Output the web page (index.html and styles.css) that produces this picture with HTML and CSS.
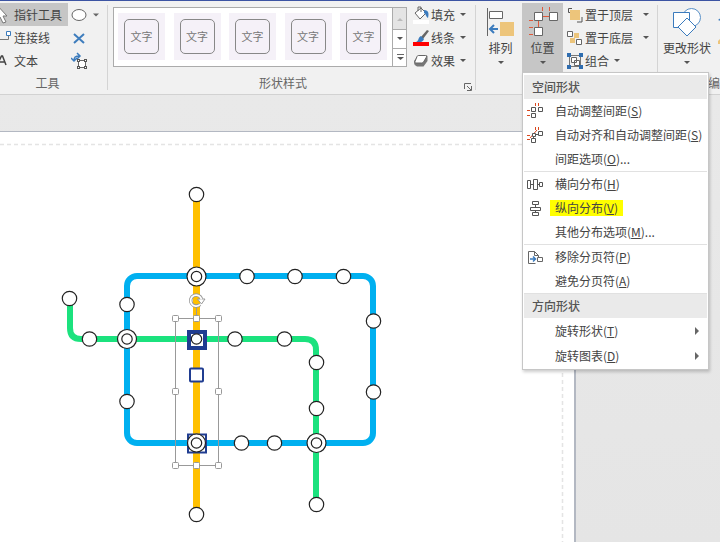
FILE: index.html
```html
<!DOCTYPE html>
<html lang="zh-CN">
<head>
<meta charset="utf-8">
<title>形状分布</title>
<link rel="stylesheet" href="styles.css">
</head>
<body>
<header class="ribbon">
  <section class="group tools">
    <div class="tool-grid">
      <button class="cmd active"><svg width="12" height="20" viewBox="0 0 12 20"><path d="M-4-1L7 11H3l3 6-3 1-3-6-4 3z" fill="#fff" stroke="#777"/></svg>指针工具</button>
      <button class="cmd" aria-label="椭圆"><svg width="28" height="16" viewBox="0 0 28 16"><ellipse cx="8" cy="8" rx="7" ry="5.500" fill="#fff" stroke="#666"/><path d="M22 6.500h6l-3 3z" fill="#666"/></svg></button>
      <button class="cmd"><svg width="12" height="16" viewBox="0 0 12 16"><path d="M0 9.500h8.500V6" fill="none" stroke="#777"/><path d="M6.500 1.500h4v4h-4z" fill="#fff" stroke="#3b7bbd"/></svg>连接线</button>
      <button class="cmd" aria-label="连接点"><svg width="16" height="16" viewBox="0 0 16 16"><path d="M3 4l10 9M13 4L3 13" stroke="#3e7dbd" stroke-width="2"/></svg></button>
      <button class="cmd"><svg width="12" height="16" viewBox="0 0 12 16"><path d="M-3 12L1.500 3h1L6 12M0 9h5" fill="none" stroke="#444" stroke-width="1.500"/></svg>文本</button>
      <button class="cmd" aria-label="文本块"><svg width="18" height="18" viewBox="0 0 18 18"><path d="M3 9c0-4 1-5 6-5M6 1l3 3-3 3M0 6l3 3 3-3" fill="none" stroke="#3b7bbd" stroke-width="1.500"/><path d="M7.500 8.500h7v7h-7z" fill="#fff" stroke="#666"/><path d="M6 7h3v3H6zM13 7h3v3h-3zM6 14h3v3H6zM13 14h3v3h-3z" fill="#555"/><path d="M7 8h1v1H7zM14 8h1v1h-1zM7 15h1v1H7zM14 15h1v1h-1z" fill="#fff"/></svg></button>
    </div>
    <h2 class="caption">工具</h2>
  </section>
  <section class="group styles">
    <div class="style-row">
      <div class="gallery">
        <div class="swatches">
          <button class="swatch"><span>文字</span></button>
          <button class="swatch"><span>文字</span></button>
          <button class="swatch"><span>文字</span></button>
          <button class="swatch"><span>文字</span></button>
          <button class="swatch"><span>文字</span></button>
        </div>
        <div class="scroller">
          <button aria-label="上一行" class="disabled"><svg width="10" height="6"><path d="M2 5h6L5 2z" fill="#bbb"/></svg></button>
          <button aria-label="下一行"><svg width="10" height="6"><path d="M2 1h6L5 4z" fill="#555"/></svg></button>
          <button aria-label="更多"><svg width="10" height="8"><path d="M2 .5h7" stroke="#666"/><path d="M2 3h7L5.500 6z" fill="#555"/></svg></button>
        </div>
      </div>
      <div class="stack">
        <button class="cmd"><svg width="16" height="18" viewBox="0 0 16 18"><path d="M0 14h16v4H0z" fill="#fff"/><path d="M2 7l6-5 5 5-6 6z" fill="#fff" stroke="#666"/><path d="M5 5V1h3v5" fill="none" stroke="#666"/><path d="M11 4c5 0 5 4 4 8-2-1-2-4-4-5z" fill="#3b7bbd"/></svg>填充<i class="arrow"></i></button>
        <button class="cmd"><svg width="16" height="18" viewBox="0 0 16 18"><path d="M14 1l2 1-6 8-2-2z" fill="#666"/><path d="M8 7l3 3c-1 3-4 4-8 3 3-1 2-5 5-6z" fill="#3b7bbd"/><path d="M0 13h16v4H0z" fill="#f00"/></svg>线条<i class="arrow"></i></button>
        <button class="cmd"><svg width="16" height="16" viewBox="0 0 16 16"><path d="M5 2.500h8q2 0 1.500 2V8l-4 5.500H4Q1 12 1 10V8z" fill="#777"/><path d="M5.500 2.500h7q2 0 1 1.500l-3 5q-.5 1-2 1H3q-2 0-1-1.500l2-5q.5-1 1.500-1z" fill="#fff" stroke="#666"/></svg>效果<i class="arrow"></i></button>
      </div>
    </div>
    <h2 class="caption">形状样式</h2>
    <button class="launcher" aria-label="形状样式选项"><svg width="8" height="8" viewBox="0 0 8 8"><path d="M.5 6V.5H7M3 3l4 4M7.500 3v4.500H3" fill="none" stroke="#666"/></svg></button>
  </section>
  <section class="group arrange">
    <button class="big"><svg width="28" height="30" viewBox="0 0 28 30"><path d="M.5 1v28" stroke="#666"/><path d="M2.500 4.500h13v7h-13z" fill="#fff" stroke="#666"/><path d="M13 15h14v14H13z" fill="#edc57b"/><path d="M11 22H4M7 18l-4 4 4 4" fill="none" stroke="#3b7bbd" stroke-width="2"/></svg>排列<i class="arrow"></i></button>
    <div class="menu-host">
      <button class="big active"><svg width="32" height="30" viewBox="0 0 32 30"><path d="M15.500 0v4M22.500 0v4M16 9.500h6M11.500 14v6M2 13.500h4M2 20.500h4M2 27.500h4" stroke="#e0593a"/><path d="M7.500 5.500h8v8h-8zM22.500 5.500h8v8h-8zM7.500 20.500h8v8h-8z" fill="#fff" stroke="#666"/></svg>位置<i class="arrow"></i></button>
      <div class="menu" role="menu">
        <h3>空间形状</h3>
        <button class="item"><svg class="mi" viewBox="0 0 18 16"><path d="M8.500 0v3M11.500 0v3M0 7.500h3M0 12.500h3" stroke="#d9481f"/><path d="M4.500 10.500h4v4h-4zM4.500 4.500h4v4h-4zM11.500 4.500h4v4h-4z" fill="#fff" stroke="#555"/></svg><span>自动调整间距(<u>S</u>)</span></button>
        <button class="item"><svg class="mi" viewBox="0 0 18 16"><path d="M8.500 0v3M11.500 0v3M0 8.500h3M0 12.500h3M3 11l7-8" stroke="#d9481f"/><path d="M4.500 11.500h4v4h-4zM5.500 6.500h3v3h-3zM11.500 4.500h4v4h-4z" fill="#fff" stroke="#555"/><path d="M6.500 10v1M9 7.500h2" stroke="#555"/></svg><span>自动对齐和自动调整间距(<u>S</u>)</span></button>
        <button class="item"><span>间距选项(<u>O</u>)...</span></button>
        <hr>
        <button class="item"><svg class="mi" viewBox="0 0 18 16"><path d="M.5 4.500h3v8h-3zM6.500 3.500h4v10h-4zM12.500 6.500h3v4h-3zM4 8.500h2M11 8.500h1" fill="#fff" stroke="#555"/></svg><span>横向分布(<u>H</u>)</span></button>
        <button class="item"><svg class="mi" viewBox="0 0 18 16"><path d="M5.500 1.500h6v3h-6zM3.500 7.500h10v3h-10zM5.500 12.500h6v3h-6zM8.500 5v2M8.500 11v1" fill="#fff" stroke="#555"/></svg><span class="mark">纵向分布(<u>V</u>)</span></button>
        <button class="item"><span>其他分布选项(<u>M</u>)...</span></button>
        <hr>
        <button class="item"><svg class="mi" viewBox="0 0 18 16"><path d="M8.500 14.500h-7v-12h6l4 4v2M7.500 2.500v4h4M10.500 8.500h5v4h-5z" fill="#fff" stroke="#666"/><path d="M3 10h5M6 7.500L8.500 10 6 12.500" fill="none" stroke="#3b7bbd" stroke-width="1.500"/></svg><span>移除分页符(<u>P</u>)</span></button>
        <button class="item"><span>避免分页符(<u>A</u>)</span></button>
        <hr>
        <h3>方向形状</h3>
        <button class="item parent"><span>旋转形状(<u>T</u>)</span><i class="sub"></i></button>
        <button class="item parent"><span>旋转图表(<u>D</u>)</span><i class="sub"></i></button>
      </div>
    </div>
    <div class="stack order">
      <button class="cmd"><svg width="16" height="16" viewBox="0 0 16 16"><path d="M5 1.500H1.500V5.500h3M15 10v5h-5" fill="none" stroke="#555"/><path d="M3 3h10v10H3z" fill="#edc57b"/></svg>置于顶层<i class="arrow far"></i></button>
      <button class="cmd"><svg width="16" height="16" viewBox="0 0 16 16"><path d="M7 3h5v5H7zM3 8h5v5H3z" fill="#edc57b"/><path d="M.5 1.500h5v5h-5zM9.500 9.500h5v5h-5z" fill="#fff" stroke="#666"/></svg>置于底层<i class="arrow far"></i></button>
      <button class="cmd"><svg width="16" height="16" viewBox="0 0 16 16"><path d="M2.500 2.500h11v11h-11z" fill="none" stroke="#777"/><path d="M4.500 4.500h5v5h-5zM7.500 7.500h5v5h-5z" fill="#fff" stroke="#666"/><path d="M0 0h4v4H0zM12 0h4v4h-4zM0 12h4v4H0zM12 12h4v4h-4z" fill="#2f6db0"/></svg>组合<i class="arrow"></i></button>
    </div>
  </section>
  <section class="group edit">
    <div class="edit-row">
      <button class="big"><svg width="30" height="30" viewBox="0 0 30 30"><circle cx="19.500" cy="10.500" r="9" fill="#fff" stroke="#5a91c8"/><path d="M1.500 5.500h16v15h-16z" fill="#fff" stroke="#3b7bbd"/><path d="M15 11l9 9-9 9-9-9z" fill="#fff" stroke="#3b7bbd"/></svg>更改形状<i class="arrow"></i></button>
      <svg class="clip" width="12" height="44" viewBox="0 0 12 44"><path d="M4 9l5-4v6z" fill="#3b7bbd"/><path d="M4 30l5-5v8H4z" fill="#edc57b"/></svg>
    </div>
    <h2 class="caption">编辑</h2>
  </section>
</header>
<main class="workspace">
  <div class="page">
    <svg class="diagram" width="576" height="411" viewBox="0 131 576 411">
      <path d="M0 144.500H562.500V542" fill="none" stroke="#e4e4e4" stroke-width="1.500" stroke-dasharray="4 3"/>
      <g fill="none" stroke-width="6">
        <rect x="127" y="276" width="246" height="167" rx="10" stroke="#00b0f0"/>
        <path d="M70 298V328Q70 339 81 339H305Q316 339 316 350V504" stroke="#1be27e"/>
        <path d="M196.500 194V515" stroke="#ffc000" stroke-width="7"/>
      </g>
      <g fill="#fff" stroke="#222" stroke-width="1.200">
        <circle cx="196.500" cy="194.500" r="7.200"/><circle cx="196.500" cy="514.500" r="7.200"/>
        <circle cx="247" cy="276.500" r="7.200"/><circle cx="295" cy="276.500" r="7.200"/><circle cx="343.500" cy="276.500" r="7.200"/>
        <circle cx="373.500" cy="321" r="7.200"/><circle cx="373.500" cy="392" r="7.200"/>
        <circle cx="127" cy="304.500" r="7.200"/><circle cx="127" cy="401.500" r="7.200"/>
        <circle cx="69.500" cy="298.500" r="7.200"/><circle cx="89.500" cy="339" r="7.200"/>
        <circle cx="235" cy="339" r="7.200"/><circle cx="284.500" cy="339" r="7.200"/>
        <circle cx="316.500" cy="362.500" r="7.200"/><circle cx="316.500" cy="408.500" r="7.200"/><circle cx="316.500" cy="504.500" r="7.200"/>
        <circle cx="241.500" cy="443" r="7.200"/><circle cx="274.500" cy="443" r="7.200"/>
        <circle cx="196.500" cy="276.500" r="9.500"/><circle cx="196.500" cy="276.500" r="5.200"/>
        <circle cx="127" cy="339" r="9.500"/><circle cx="127" cy="339" r="5.200"/>
        <circle cx="316.500" cy="443" r="9.500"/><circle cx="316.500" cy="443" r="5.200"/>
      </g>
      <rect x="189" y="332" width="16" height="16" fill="#fff" stroke="#203d91" stroke-width="4"/>
      <circle cx="196.500" cy="339" r="5.200" fill="#fff" stroke="#222" stroke-width="1.200"/>
      <rect x="190" y="368.500" width="13" height="13" rx="1" fill="#fff" stroke="#203d91" stroke-width="2"/>
      <rect x="188" y="434.500" width="18" height="18" fill="#fff" stroke="#203d91" stroke-width="2"/>
      <g fill="#fff" stroke="#222" stroke-width="1.200"><circle cx="196.500" cy="443" r="9"/><circle cx="196.500" cy="443" r="5.200"/></g>
      <path d="M175.500 318.500h43v147h-43zM196.500 307v12" fill="none" stroke="#999"/>
      <g fill="#fff" stroke="#999">
        <rect x="172.500" y="315.500" width="6" height="6" rx="1"/><rect x="193.500" y="315.500" width="6" height="6" rx="1"/><rect x="215.500" y="315.500" width="6" height="6" rx="1"/>
        <rect x="172.500" y="388.500" width="6" height="6" rx="1"/><rect x="215.500" y="388.500" width="6" height="6" rx="1"/>
        <rect x="172.500" y="462.500" width="6" height="6" rx="1"/><rect x="193.500" y="462.500" width="6" height="6" rx="1"/><rect x="215.500" y="462.500" width="6" height="6" rx="1"/>
      </g>
      <path d="M200 304.500A5.500 5.500 0 1 1 201.500 299" fill="none" stroke="#999" stroke-width="3.500"/>
      <path d="M197.500 299h7.500l-3.500 5z" fill="#fff" stroke="#999"/>
      <path d="M200 304.500A5.500 5.500 0 1 1 201.500 299.500" fill="none" stroke="#fff" stroke-width="1.700"/>
    </svg>
  </div>
</main>
</body>
</html>
```

FILE: styles.css
```css
* { box-sizing: border-box; }
body {
  margin: 0;
  min-height: 100vh;
  display: flex;
  flex-direction: column;
  overflow: hidden;
  font: 12px/16px "Noto Sans CJK SC", sans-serif;
  color: #444;
  background: #e6e6e6;
}
button {
  border: 0;
  padding: 0;
  background: none;
  font: inherit;
  color: inherit;
  white-space: nowrap;
}
svg { display: block; flex: none; }
h2, h3 { margin: 0; font: inherit; }
.ribbon {
  display: flex;
  height: 95px;
  background: #f1f1f1;
  border-top: 1px solid #3c54a3;
  border-bottom: 1px solid #d2d2d2;
}
.group {
  position: relative;
  flex: none;
  display: flex;
  flex-direction: column;
  justify-content: space-between;
  padding: 2px 0 3px;
}
.group + .group::before {
  content: "";
  position: absolute;
  left: 0;
  top: 4px;
  bottom: 4px;
  width: 1px;
  background: #d4d4d4;
}
.caption { text-align: center; color: #666; line-height: 16px; }
.tools { width: 107px; }
.tools .caption { padding-right: 12px; }
.tool-grid {
  display: grid;
  grid-template-columns: 68px 1fr;
  grid-auto-rows: 23px;
  column-gap: 3px;
}
.cmd { display: flex; align-items: center; gap: 2px; }
.active { background: #c6c6c6; }
.styles { width: 368px; }
.styles .caption { padding-right: 16px; }
.style-row { display: flex; gap: 6px; padding-left: 6px; }
.gallery {
  display: flex;
  height: 60px;
  width: 294px;
  margin-top: 4px;
  background: #fff;
  border: 1px solid #ababab;
}
.swatches {
  flex: 1;
  display: flex;
  justify-content: space-between;
  padding: 5px 5px 0 4px;
}
.swatch {
  width: 47px;
  height: 47px;
  display: grid;
  place-items: center;
  background: #f5f1f8;
}
.swatch span {
  width: 35px;
  height: 35px;
  border: 1px solid #888;
  border-radius: 5px;
  font-size: 11px;
  line-height: 32px;
  color: #777;
}
.scroller { width: 14px; display: grid; grid-template-rows: 21px 19px 18px; }
.scroller button {
  display: grid;
  place-items: center;
  border-left: 1px solid #ababab;
}
.scroller button + button { border-top: 1px solid #ababab; }
.scroller .disabled { background: #e4e4e4; }
.stack { display: grid; grid-auto-rows: 23px; align-content: start; }
.arrow {
  border: 3px solid transparent;
  border-top-color: #555;
  border-bottom: 0;
  margin-left: 3px;
}
.arrow.far { margin-left: 8px; }
.launcher { position: absolute; right: 3px; bottom: 3px; }
.arrange { width: 182px; flex-direction: row; justify-content: start; }
.big {
  display: flex;
  flex-direction: column;
  align-items: center;
  padding-top: 4px;
  height: 70px;
}
.big svg { margin-bottom: 3px; }
.big .arrow { margin: 5px 0 0; }
.arrange > .big { width: 47px; padding-left: 4px; }
.menu-host { position: relative; width: 41px; }
.menu-host .big { width: 100%; }
.order { padding-left: 4px; }
.edit { flex: 1; min-width: 0; overflow: hidden; }
.edit .caption { padding-left: 51px; text-align: left; white-space: nowrap; }
.edit-row { display: flex; padding-left: 6px; gap: 3px; }
.clip { margin-top: 8px; }
.menu {
  position: absolute;
  z-index: 2;
  top: 69px;
  left: 0;
  width: 187px;
  padding: 2px 1px 1px;
  background: #fff;
  border: 1px solid #c6c6c6;
  box-shadow: 1px 2px 3px #0003;
}
.menu h3 {
  padding-left: 8px;
  line-height: 24px;
  font-weight: 500;
  color: #555;
  background: #eaeaea;
}
.item {
  display: flex;
  align-items: center;
  width: 100%;
  height: 24px;
  padding-left: 31px;
}
.item.parent { height: 25px; }
.mi { width: 18px; height: 16px; margin: 0 10px 0 -28px; }
.mark {
  background: #ff0;
  margin-left: -5px;
  padding: 0 5px;
}
.menu hr { margin: 0; border: 0; border-top: 1px solid #e1e1e1; }
.sub {
  margin: 0 8px 0 auto;
  border: 4px solid transparent;
  border-left-color: #666;
  border-right: 0;
}
.workspace {
  flex: 1;
  display: flex;
  padding-top: 36px;
  background: linear-gradient(#e9e9e9, #e5e5e5);
}
.page {
  width: 80%;
  background: #fff;
  border-top: 1px solid #b3b8c2;
  border-right: 2px solid #b3b8c2;
  overflow: hidden;
}
.diagram { margin-top: -1px; }
```
